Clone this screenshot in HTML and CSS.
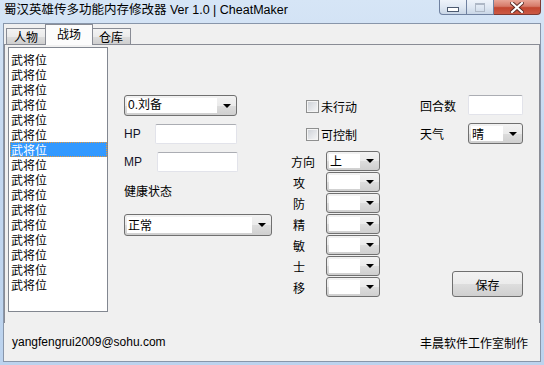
FILE: index.html
```html
<!DOCTYPE html>
<html lang="zh-CN">
<head>
    <meta charset="UTF-8">
    <title>蜀汉英雄传多功能内存修改器 Ver 1.0 | CheatMaker</title>
    <link rel="stylesheet" href="styles.css">
</head>
<body>
    <div class="window">
        <div class="titlebar">
            <span class="title">蜀汉英雄传多功能内存修改器 Ver 1.0 | CheatMaker</span>
            <div class="caption-buttons">
                <div class="cap cap-min"><span class="min-bar"></span></div>
                <div class="cap cap-max"><span class="max-box"></span></div>
                <div class="cap cap-close">
                    <svg width="14" height="11" viewBox="0 0 14 11">
                        <path d="M2 1 L12 10 M12 1 L2 10" stroke="#5a2a24" stroke-width="4" stroke-linecap="square"/>
                        <path d="M2 1 L12 10 M12 1 L2 10" stroke="#ffffff" stroke-width="2.2" stroke-linecap="square"/>
                    </svg>
                </div>
            </div>
        </div>

        <div class="client">
            <div class="tabs">
                <div class="tab tab-first">人物</div>
                <div class="tab active">战场</div>
                <div class="tab tab-last">仓库</div>
            </div>

            <div class="panel">
                <ul class="listbox">
                    <li>武将位</li>
                    <li>武将位</li>
                    <li>武将位</li>
                    <li>武将位</li>
                    <li>武将位</li>
                    <li>武将位</li>
                    <li class="selected">武将位</li>
                    <li>武将位</li>
                    <li>武将位</li>
                    <li>武将位</li>
                    <li>武将位</li>
                    <li>武将位</li>
                    <li>武将位</li>
                    <li>武将位</li>
                    <li>武将位</li>
                    <li>武将位</li>
                </ul>

                <div class="col-a">
                    <div class="combo combo-hero"><span class="combo-text">0.刘备</span><span class="combo-arrow"></span></div>
                    <div class="field-row hp-row">
                        <span class="lbl-latin lbl-hp">HP</span>
                        <span class="textbox tb-hp"></span>
                    </div>
                    <div class="field-row mp-row">
                        <span class="lbl-latin lbl-mp">MP</span>
                        <span class="textbox tb-mp"></span>
                    </div>
                    <div class="health-label">健康状态</div>
                    <div class="combo combo-health"><span class="combo-text">正常</span><span class="combo-arrow"></span></div>
                </div>

                <div class="col-b">
                    <div class="check-row first"><span class="checkbox"></span>未行动</div>
                    <div class="check-row"><span class="checkbox"></span>可控制</div>
                    <div class="stat-list">
                        <div class="stat-row"><span class="stat-lbl">方向</span><div class="combo combo-small"><span class="combo-text">上</span><span class="combo-arrow"></span></div></div>
                        <div class="stat-row"><span class="stat-lbl single">攻</span><div class="combo combo-small"><span class="combo-text"></span><span class="combo-arrow"></span></div></div>
                        <div class="stat-row"><span class="stat-lbl single">防</span><div class="combo combo-small"><span class="combo-text"></span><span class="combo-arrow"></span></div></div>
                        <div class="stat-row"><span class="stat-lbl single">精</span><div class="combo combo-small"><span class="combo-text"></span><span class="combo-arrow"></span></div></div>
                        <div class="stat-row"><span class="stat-lbl single">敏</span><div class="combo combo-small"><span class="combo-text"></span><span class="combo-arrow"></span></div></div>
                        <div class="stat-row"><span class="stat-lbl single">士</span><div class="combo combo-small"><span class="combo-text"></span><span class="combo-arrow"></span></div></div>
                        <div class="stat-row"><span class="stat-lbl single">移</span><div class="combo combo-small"><span class="combo-text"></span><span class="combo-arrow"></span></div></div>
                    </div>
                </div>

                <div class="col-c">
                    <div class="field-row turn-row">
                        <span class="lbl-right">回合数</span>
                        <span class="textbox tb-turn"></span>
                    </div>
                    <div class="field-row weather-row">
                        <span class="lbl-right">天气</span>
                        <div class="combo combo-weather"><span class="combo-text">晴</span><span class="combo-arrow"></span></div>
                    </div>
                    <button class="save-btn">保存</button>
                </div>
            </div>

            <div class="footer">
                <span class="email">yangfengrui2009@sohu.com</span>
                <span class="credit">丰晨软件工作室制作</span>
            </div>
        </div>
    </div>
</body>
</html>
```

FILE: styles.css
```css
body {
    margin: 0;
    font-family: "Liberation Sans", "Noto Sans CJK SC", sans-serif;
    font-size: 12px;
    color: #000;
    background: #fff;
}
.window {
    width: 544px;
    height: 365px;
    box-sizing: border-box;
    background: linear-gradient(180deg, #d6e5f6 0%, #c4d8f0 40%, #bcd3ee 100%);
    overflow: hidden;
}

/* title bar */
.titlebar {
    height: 23px;
    display: flex;
    align-items: flex-start;
    justify-content: space-between;
}
.title {
    padding: 2px 0 0 4px;
    font-family: "Liberation Sans", "Noto Sans CJK SC", sans-serif;
    font-size: 12.5px;
    line-height: 16px;
    color: #000;
}
.caption-buttons {
    display: flex;
    margin-right: 3px;
}
.cap {
    height: 15px;
    box-sizing: border-box;
    border: 1px solid #6f81a0;
    border-top: none;
    display: flex;
    align-items: center;
    justify-content: center;
}
.cap-min {
    width: 28px;
    border-radius: 0 0 0 4px;
    background: linear-gradient(180deg, #eef3fa 0%, #dfe8f3 50%, #c9d6e6 100%);
}
.cap-max {
    width: 27px;
    border-left: none;
    background: linear-gradient(180deg, #eef3fa 0%, #dfe8f3 50%, #c9d6e6 100%);
}
.cap-close {
    width: 47px;
    border-left: none;
    border-color: #7d3a33;
    border-radius: 0 0 4px 0;
    background: linear-gradient(180deg, #e8a597 0%, #d67a69 45%, #c24630 55%, #cc5a45 100%);
}
.min-bar {
    width: 10px;
    height: 3px;
    margin-top: 5px;
    border: 1px solid #4c5a70;
    background: #fff;
}
.max-box {
    width: 8px;
    height: 6px;
    border: 1px solid #aeb8c6;
    border-top-width: 2px;
}

/* client area */
.client {
    width: 538px;
    height: 339px;
    margin-left: 3px;
    box-sizing: border-box;
    border: 1px solid #8896aa;
    background: #f0f0f0;
    display: flex;
    flex-direction: column;
}
.tabs {
    height: 20px;
    display: flex;
    align-items: flex-end;
    padding-left: 2px;
}
.tab {
    height: 16px;
    box-sizing: border-box;
    border: 1px solid #898c95;
    border-bottom: none;
    background: linear-gradient(180deg, #f3f3f3 0%, #ebebeb 50%, #dddddd 51%, #cfcfcf 100%);
    font-family: "Noto Sans CJK SC", sans-serif;
    line-height: 15px;
    font-size: 12px;
    text-align: center;
}
.tab-first {
    width: 40px;
}
.tab.active {
    height: 21px;
    width: 48px;
    margin: 0 -1px -1px -1px;
    padding-top: 1px;
    background: #fcfcfc;
    position: relative;
    z-index: 1;
    line-height: 16px;
}
.tab-last {
    width: 39px;
    border-left: none;
}

/* tab page */
.panel {
    height: 279px;
    box-sizing: border-box;
    border: 1px solid #898c95;
    border-bottom: none;
    display: flex;
    align-items: flex-start;
}
.listbox {
    list-style: none;
    margin: 2px 0 0 3px;
    padding: 4px 0 0 1px;
    width: 100px;
    height: 265px;
    box-sizing: border-box;
    border: 1px solid #828790;
    background: #fff;
    font-family: "Noto Sans CJK SC", sans-serif;
    overflow: hidden;
}
.listbox li {
    height: 15px;
    line-height: 15px;
    font-size: 12px;
    padding-left: 1px;
    overflow: hidden;
}
.listbox li.selected {
    background: #3399ff;
    color: #fff;
    outline: 1px dotted #e89a3c;
    outline-offset: -1px;
}

/* generic controls */
.field-row {
    display: flex;
    align-items: center;
}
.textbox {
    display: block;
    height: 20px;
    box-sizing: border-box;
    background: #fff;
    border: 1px solid #e2e3ea;
    border-top-color: #abadb3;
    border-radius: 2px;
}
.combo {
    display: flex;
    box-sizing: border-box;
    border: 1px solid #707070;
    border-radius: 3px;
    background: linear-gradient(180deg, #f2f2f2 0%, #ebebeb 50%, #dddddd 51%, #cfcfcf 100%);
    font-family: "Noto Sans CJK SC", sans-serif;
}
.combo-text {
    flex: 1;
    margin: 2px 0 2px 2px;
    background: #fff;
    line-height: 15px;
    padding-left: 1px;
}
.combo-arrow {
    width: 19px;
    display: flex;
    align-items: center;
    justify-content: center;
}
.combo-arrow::after {
    content: "";
    border-left: 4px solid transparent;
    border-right: 4px solid transparent;
    border-top: 4px solid #000;
}

/* left column */
.col-a {
    margin: 50px 0 0 16px;
    width: 148px;
}
.combo-hero {
    width: 113px;
    height: 21px;
}
.combo-hero .combo-text {
    font-family: "Liberation Sans", "Noto Sans CJK SC", sans-serif;
}
.hp-row {
    margin-top: 8px;
}
.mp-row {
    margin-top: 8px;
}
.lbl-latin {
    font-family: "Liberation Sans", sans-serif;
    color: #141428;
}
.lbl-hp {
    width: 31px;
}
.lbl-mp {
    width: 33px;
}
.tb-hp {
    width: 82px;
}
.tb-mp {
    width: 81px;
}
.health-label {
    margin-top: 11px;
    height: 16px;
    line-height: 16px;
    font-family: "Noto Sans CJK SC", sans-serif;
}
.combo-health {
    margin-top: 15px;
    width: 148px;
    height: 22px;
}

/* middle column */
.col-b {
    margin: 53px 0 0 19px;
    width: 89px;
    font-family: "Noto Sans CJK SC", sans-serif;
}
.check-row {
    display: flex;
    align-items: center;
    height: 16px;
    padding-left: 15px;
    margin-top: 12px;
}
.check-row.first {
    margin-top: 0;
}
.checkbox {
    width: 13px;
    height: 13px;
    box-sizing: border-box;
    margin-right: 2px;
    border: 1px solid #8e8f8f;
    background: linear-gradient(135deg, #cbcfd5 0%, #e6e8eb 60%, #f7f7f7 100%);
    box-shadow: inset 0 0 0 1px #f4f4f4;
}
.stat-list {
    margin-top: 9px;
    display: flex;
    flex-direction: column;
    gap: 1px;
}
.stat-row {
    display: flex;
    align-items: center;
}
.stat-lbl {
    width: 35px;
}
.stat-lbl.single {
    padding-left: 2px;
    width: 33px;
}
.combo-small {
    width: 54px;
    height: 20px;
}
.combo-small .combo-text {
    line-height: 14px;
}

/* right column */
.col-c {
    margin: 50px 0 0 40px;
    width: 103px;
    font-family: "Noto Sans CJK SC", sans-serif;
}
.lbl-right {
    width: 48px;
}
.tb-turn {
    width: 55px;
}
.weather-row {
    margin-top: 8px;
}
.combo-weather {
    width: 55px;
    height: 21px;
}
.save-btn {
    display: block;
    margin: 127px 0 0 32px;
    width: 71px;
    height: 26px;
    border: 1px solid #707070;
    border-radius: 3px;
    background: linear-gradient(180deg, #f2f2f2 0%, #ebebeb 50%, #dddddd 51%, #cfcfcf 100%);
    font-family: "Noto Sans CJK SC", sans-serif;
    font-size: 12px;
    color: #000;
    padding: 0;
}

/* footer */
.footer {
    flex: 1;
    display: flex;
    align-items: center;
    justify-content: space-between;
    padding: 0 12px 0 8px;
}
.email {
    font-family: "Liberation Sans", sans-serif;
}
.credit {
    font-family: "Noto Sans CJK SC", sans-serif;
}
```
